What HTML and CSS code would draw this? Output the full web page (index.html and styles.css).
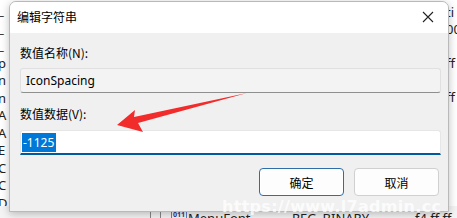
FILE: index.html
```html
<!DOCTYPE html>
<html>
<head>
<meta charset="utf-8">
<link rel="stylesheet" href="styles.css">
</head>
<body>
<div class="backdrop">
  <div class="bg-left">
    <span>_</span><span>_</span><span>_</span><span>p</span><span>n</span><span>n</span><span>A</span><span>A</span><span>E</span><span>C</span><span>C</span><span>D</span>
  </div>
  <div class="bg-right">
    <span>ti</span><span>00</span><span></span><span>ff</span><span></span><span>ff</span>
  </div>
  <div class="bg-bottom">
    <span class="sep"></span><span class="sep"></span>
    <span class="regicon">011</span>
    <span class="name">MenuFont</span>
    <span class="type">REG_BINARY</span>
    <span class="data">f4 ff ff ff</span>
  </div>
</div>

<div class="dialog">
  <div class="titlebar">
    <span class="title">编辑字符串</span>
    <span class="close">
      <svg width="12" height="12" viewBox="0 0 12 12"><path d="M1 1 L11 11 M11 1 L1 11" stroke="#222" stroke-width="1.1" fill="none"/></svg>
    </span>
  </div>
  <div class="content">
    <div class="label l1">数值名称(N):</div>
    <div class="field readonly">IconSpacing</div>
    <div class="label l2">数值数据(V):</div>
    <div class="field editable"><span class="sel">-1125</span></div>
    <div class="buttons">
      <button class="btn default">确定</button>
      <button class="btn">取消</button>
    </div>
  </div>
</div>

<svg class="arrow" width="457" height="218" viewBox="0 0 457 218">
  <polygon points="117,125 135,110 134,117 247,93 138,123 143,132" fill="#f22b2b"/>
</svg>

<div class="watermark">https://www.l7admin.cc</div>
</body>
</html>
```

FILE: styles.css
```css
html, body {
  margin: 0;
  padding: 0;
  overflow: hidden;
}
body {
  width: 457px;
  height: 218px;
  position: relative;
  background: #ffffff;
  font-family: "Segoe UI", "Noto Sans", "Noto Sans CJK SC", sans-serif;
  font-size: 12px;
  color: #000;
}
.backdrop {
  position: absolute;
  inset: 0;
  overflow: hidden;
}
.bg-left {
  position: absolute;
  left: -2px;
  top: 2px;
  display: flex;
  flex-direction: column;
  font-size: 13px;
  line-height: 17.5px;
  color: #222;
}
.bg-left span { height: 17.5px; }
.bg-right {
  position: absolute;
  left: 446px;
  top: 4px;
  display: flex;
  flex-direction: column;
  font-size: 13px;
  line-height: 17px;
  color: #222;
}
.bg-right span { height: 17px; }
.bg-bottom {
  position: absolute;
  left: 0;
  top: 206px;
  width: 457px;
  height: 12px;
  background: #f4f4f4;
  font-size: 13px;
  line-height: 16px;
  color: #222;
  overflow: hidden;
}
.bg-bottom .sep {
  position: absolute;
  top: 0;
  width: 1px;
  height: 12px;
  background: #888;
}
.bg-bottom .sep:nth-child(1) { left: 150px; }
.bg-bottom .sep:nth-child(2) { left: 160px; }
.bg-bottom .regicon {
  position: absolute;
  left: 171px;
  top: 4px;
  font-size: 7px;
  line-height: 8px;
  color: #2a3a9a;
  font-weight: bold;
  border: 1px solid #6a7ac0;
  border-radius: 2px;
  padding: 0 1px;
}
.bg-bottom .name { position: absolute; left: 188px; top: 4px; }
.bg-bottom .type { position: absolute; left: 292px; top: 4px; }
.bg-bottom .data { position: absolute; left: 415px; top: 4px; }

.dialog {
  position: absolute;
  left: 9px;
  top: 1px;
  width: 438px;
  height: 209px;
  border: 1px solid #b9b9b9;
  border-radius: 7px 7px 0 0;
  box-shadow: 0 2px 8px rgba(0,0,0,0.25);
  overflow: hidden;
  display: flex;
  flex-direction: column;
  background: #f0f0f0;
}
.titlebar {
  height: 31px;
  flex: none;
  background: #ffffff;
  display: flex;
  align-items: center;
  justify-content: space-between;
  padding: 0 7px 2px 7px;
  box-sizing: border-box;
}
.title {
  font-family: "Noto Sans CJK SC", sans-serif;
  font-size: 12px;
  line-height: 16px;
  color: #000;
}
.close {
  width: 24px;
  display: flex;
  justify-content: center;
  margin-right: 1px;
}
.close svg { display: block; }
.content {
  flex: 1;
  display: flex;
  flex-direction: column;
  padding: 12px 7px 0 10px;
}
.label {
  font-family: "Noto Sans CJK SC", sans-serif;
  font-size: 12px;
  line-height: 16px;
  height: 16px;
  flex: none;
}
.l1 { margin-bottom: 7px; }
.l2 { margin-top: 13px; margin-bottom: 8px; }
.field {
  height: 25px;
  flex: none;
  box-sizing: border-box;
  display: flex;
  align-items: center;
  padding-left: 5px;
  font-size: 12px;
}
.readonly {
  background: #f3f3f3;
  border: 1px solid #e0e0e0;
  border-bottom: 1px solid #8f8f8f;
  border-radius: 3px;
}
.editable {
  background: #ffffff;
  border: 1px solid #e6e6e6;
  border-bottom: 2px solid #005a9e;
  border-radius: 3px 3px 0 0;
  padding-left: 1px;
}
.sel {
  background: #0078d7;
  color: #ffffff;
  padding: 1px 2px 1px 1px;
  line-height: 17px;
}
.buttons {
  display: flex;
  justify-content: flex-end;
  gap: 10px;
  margin-top: 13px;
  padding-right: 2px;
  flex: none;
}
.btn {
  width: 85px;
  height: 28px;
  box-sizing: border-box;
  background: #fdfdfd;
  border: 1px solid #d0d0d0;
  border-radius: 4px;
  font-family: "Noto Sans CJK SC", sans-serif;
  font-size: 12px;
  color: #000;
  padding: 0;
}
.btn.default {
  border: 1px solid #2d6da8;
  box-shadow: inset 0 0 0 1px #ffffff;
}
.arrow {
  position: absolute;
  left: 0;
  top: 0;
  pointer-events: none;
}
.watermark {
  position: absolute;
  left: 222px;
  top: 198px;
  font-family: "DejaVu Sans", sans-serif;
  font-weight: bold;
  font-size: 16px;
  line-height: 18px;
  letter-spacing: 0.3px;
  color: rgba(255,255,255,0.8);
}
```
